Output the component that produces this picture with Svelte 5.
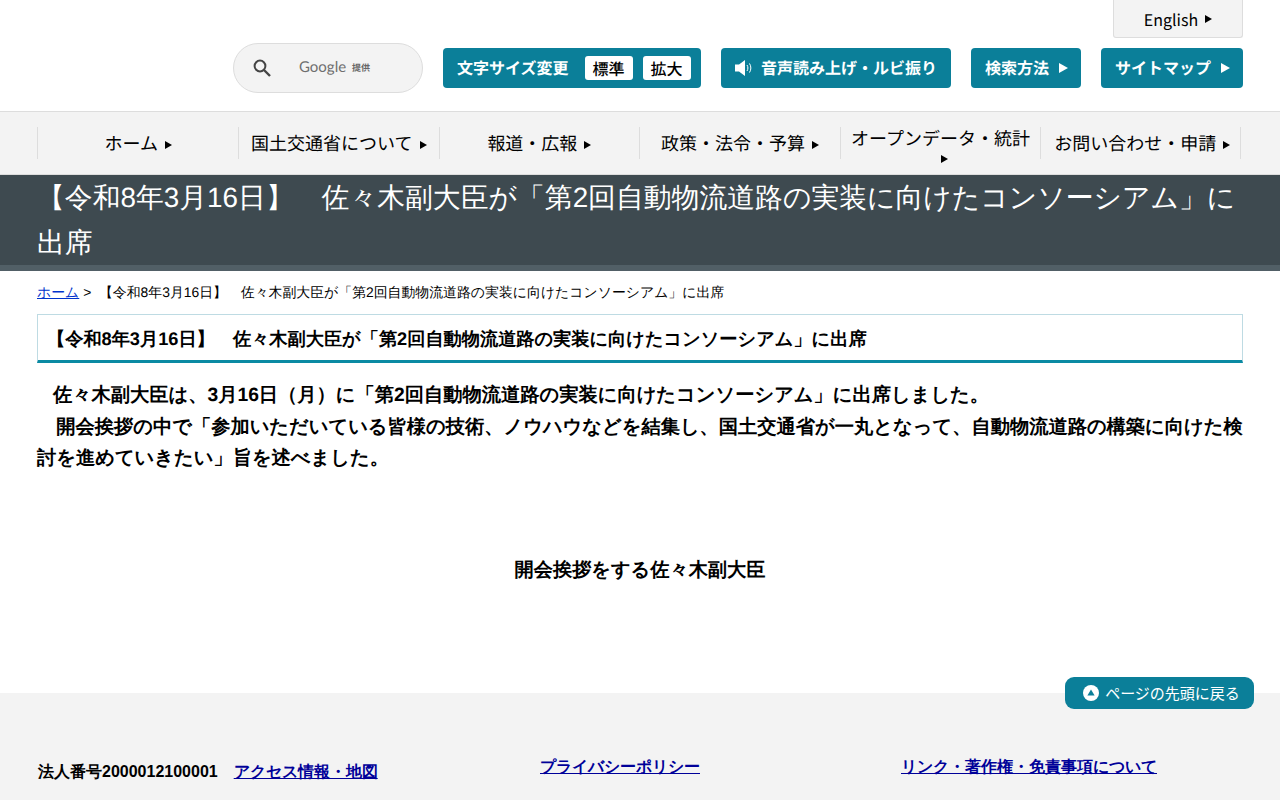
<script>
  const nav = ['ホーム', '国土交通省について', '報道・広報', '政策・法令・予算', 'オープンデータ・統計', 'お問い合わせ・申請'];
</script>

<div class="page" lang="ja">
  <header class="header">
    <div class="lang-row"><a class="lang">English<i class="tri dark"></i></a></div>
    <div class="tools">
      <div class="search">
        <svg class="mag" width="20" height="20" viewBox="0 0 20 20"><circle cx="8" cy="8" r="5.4" fill="none" stroke="#444" stroke-width="2"/><path d="M12 12l6 6" stroke="#444" stroke-width="2.4"/></svg>
        <span class="g">Google</span><span class="prov">提供</span>
      </div>
      <div class="btn size"><span class="size-label">文字サイズ変更</span><span class="chip first">標準</span><span class="chip">拡大</span></div>
      <div class="btn voice">
        <svg width="20" height="18" viewBox="0 0 20 18"><path d="M1 5.5h4L11 1v16l-6-4.500H1z" fill="#fff"/><path d="M13 6c1.200 1.800 1.200 4.200 0 6M15.500 4.500c1.800 2.800 1.800 6.200 0 9" fill="none" stroke="#fff" stroke-width="1"/></svg>
        <span>音声読み上げ・ルビ振り</span>
      </div>
      <div class="btn method"><span>検索方法</span><i class="tri white"></i></div>
      <div class="btn map"><span>サイトマップ</span><i class="tri white"></i></div>
    </div>
  </header>

  <nav class="nav">
    {#each nav as item}
      <a class="nav-item">{item}<i class="tri dark"></i></a>
    {/each}
  </nav>

  <h1 class="title">【令和8年3月16日】　佐々木副大臣が「第2回自動物流道路の実装に向けたコンソーシアム」に出席</h1>

  <main class="main">
    <p class="crumb"><a class="crumb-link">ホーム</a> &gt;&nbsp; 【令和8年3月16日】　佐々木副大臣が「第2回自動物流道路の実装に向けたコンソーシアム」に出席</p>
    <h2 class="heading">【令和8年3月16日】　佐々木副大臣が「第2回自動物流道路の実装に向けたコンソーシアム」に出席</h2>
    <p class="body">&nbsp;&nbsp;&nbsp;佐々木副大臣は、3月16日（月）に「第2回自動物流道路の実装に向けたコンソーシアム」に出席しました。<br />　開会挨拶の中で「参加いただいている皆様の技術、ノウハウなどを結集し、国土交通省が一丸となって、自動物流道路の構築に向けた検討を進めていきたい」旨を述べました。</p>
    <p class="caption">開会挨拶をする佐々木副大臣</p>
  </main>

  <footer class="footer">
    <a class="top">
      <svg width="16" height="16" viewBox="0 0 16 16"><circle cx="8" cy="8" r="8" fill="#fff"/><path d="M8 4.400l3.600 6H4.400z" fill="#0b7f99"/></svg>
      <span class="top-label">ページの先頭に戻る</span>
    </a>
    <div class="foot-row">
      <div class="foot-a">法人番号2000012100001<a class="foot-link access">アクセス情報・地図</a></div>
      <a class="foot-link priv">プライバシーポリシー</a>
      <a class="foot-link links">リンク・著作権・免責事項について</a>
    </div>
  </footer>
</div>

<style>
  :global(body) { margin: 0; background: #fff; overflow: hidden; }
  .page { width: 1280px; height: 800px; overflow: hidden; font-family: "Liberation Sans", sans-serif; color: #000; text-rendering: geometricPrecision; }
  a { cursor: pointer; }
  .header { height: 111px; padding: 0 37px; box-sizing: border-box; }
  .lang-row { display: flex; justify-content: flex-end; height: 38px; }
  .lang { width: 130px; height: 38px; box-sizing: border-box; background: #f3f3f3; border: 1px solid #ddd; border-top: 0; border-radius: 0 0 3px 3px; display: flex; align-items: center; justify-content: center; gap: 7px; font: 16px/38px "Noto Sans CJK JP", sans-serif; }
  .tools { display: flex; justify-content: flex-end; align-items: flex-start; margin-top: 10px; gap: 20px; }
  .search { width: 190px; height: 50px; box-sizing: border-box; margin-top: -5px; border: 1px solid #ddd; border-radius: 25px; background: #f3f3f3; display: flex; align-items: center; position: relative; }
  .mag { margin-left: 18px; }
  .g { margin-left: 27px; margin-top: -2px; font: 15px "Lato", sans-serif; color: #6e6e6e; }
  .prov { margin-left: 6px; margin-top: -1px; font: bold 9px "Noto Sans CJK JP", sans-serif; color: #666; }
  .btn { height: 40px; box-sizing: border-box; background: #0b7f99; border-radius: 4px; color: #fff; display: flex; align-items: center; font: bold 16px/40px "Noto Sans CJK JP", sans-serif; }
  .btn span { margin-top: -2px; }
  .size { width: 258px; padding-left: 14px; }
  .size-label { margin-right: 16px; }
  .chip { width: 48px; height: 24px; line-height: 24px; text-align: center; background: #fff; color: #000; border-radius: 3px; font-weight: 500; margin-top: 0 !important; }
  .chip.first { margin-right: 10px; }
  .voice { width: 230px; padding-left: 13px; gap: 7px; }
  .method { width: 110px; padding-left: 14px; gap: 8px; }
  .method .tri, .map .tri { margin-left: 2px; }
  .map { width: 142px; padding-left: 14px; gap: 8px; }
  .tri { display: inline-block; width: 0; height: 0; border-style: solid; border-color: transparent; }
  .tri.white { border-left-color: #fff; border-width: 5px 0 5px 9px; }
  .tri.dark { border-left-color: #000; border-width: 4px 0 4px 7px; }
  .nav { height: 64px; box-sizing: border-box; border-top: 1px solid #ddd; border-bottom: 1px solid #ddd; background: #f3f3f3; padding: 15px 37px 15px 37.4px; display: grid; grid-template-columns: repeat(6, 200.6px); }
  .nav-item { height: 32px; border-left: 1px solid #ddd; display: block; text-align: center; font: 18px/24px "Noto Sans CJK JP", sans-serif; padding: 4px 5px 0; box-sizing: border-box; }
  .nav-item:last-child { border-right: 1px solid #ddd; padding-left: 8px; }
  .nav-item .tri { margin-left: 7px; vertical-align: 1px; }
  .nav-item:nth-child(5) { padding-top: 2px; line-height: 19px; }
  .title { margin: 0; box-sizing: border-box; height: 96px; padding: 1px 37px 0; background: #3e4a50; border-bottom: 6px solid #515f66; color: #fff; font-weight: 400; font-size: 27.84px; line-height: 44.6px; }
  .main { padding: 0 37px; height: 422px; box-sizing: border-box; }
  .crumb { margin: 11px 0 0; font-size: 13.88px; line-height: 20px; }
  .crumb-link { color: #03c; text-decoration: underline; }
  .heading { margin: 12px 0 0; height: 49px; box-sizing: border-box; border: 1px solid #bedbe3; border-bottom: 3px solid #0b8aa3; padding: 0 9px; font-size: 18.2px; line-height: 48px; font-weight: 700; }
  .body { margin: 17px 0 0; font-size: 19.26px; line-height: 31.7px; font-weight: 700; }
  .caption { margin: 80px 0 0; text-align: center; font-size: 19.2px; line-height: 32px; font-weight: 700; }
  .footer { height: 107px; background: #f3f3f3; position: relative; font-weight: 700; font-size: 16px; margin-top: -11px; text-rendering: auto; }
  .top { position: absolute; right: 26px; top: -16px; width: 189px; height: 32px; box-sizing: border-box; padding-left: 4px; background: #0b7f99; border-radius: 9px; color: #fff; display: flex; align-items: center; justify-content: center; gap: 6px; font: 15px "Noto Sans CJK JP", sans-serif; }
  .top-label { margin-top: -2px; }
  .foot-row { display: flex; padding: 62px 0 0 38px; align-items: flex-start; }
  .foot-link { color: #009; text-decoration: underline; }
  .foot-a { width: 502px; padding-top: 5px; line-height: 24px; }
  .access { margin-left: 16px; }
  .priv { width: 361px; line-height: 24px; }
  .links { line-height: 24px; }
</style>
